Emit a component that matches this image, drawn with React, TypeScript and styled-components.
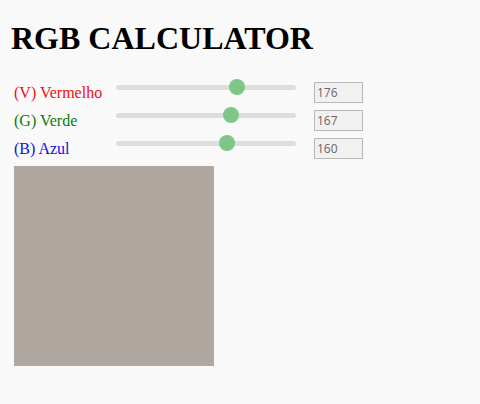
import React, { useState } from 'react'
import styled, { createGlobalStyle } from 'styled-components'

const GlobalStyle = createGlobalStyle`
  body {
    margin: 0;
    background: #f9f9f9;
    font-family: "Liberation Serif", "Times New Roman", serif;
  }
`

const Page = styled.div`
  padding: 20px 14px 0;
`

const Title = styled.h1`
  margin: 0 0 25px -3px;
  font-size: 32px;
  font-weight: bold;
  color: #000;
`

const Rows = styled.div`
  display: flex;
  flex-direction: column;
  gap: 7px;
`

const Row = styled.div`
  display: grid;
  grid-template-columns: 84px 180px 49px;
  column-gap: 18px;
  align-items: center;
  height: 21px;
`

const Label = styled.span<{ $color: string }>`
  font-size: 16px;
  color: ${({ $color }) => $color};
  white-space: nowrap;
`

const Slider = styled.input`
  -webkit-appearance: none;
  appearance: none;
  width: 180px;
  height: 5px;
  margin: 0 0 11px;
  border-radius: 3px;
  background: #dddddd;
  outline: none;

  &::-webkit-slider-thumb {
    -webkit-appearance: none;
    appearance: none;
    width: 16px;
    height: 16px;
    border-radius: 50%;
    background: #7ec787;
    border: none;
  }
`

const ValueBox = styled.input`
  box-sizing: border-box;
  width: 49px;
  height: 21px;
  padding: 0 2px;
  border: 1px solid #b8b8b8;
  background: #f1f1f1;
  color: #666666;
  font-family: "Open Sans", "DejaVu Sans", sans-serif;
  font-size: 12px;
`

const Swatch = styled.div`
  width: 200px;
  height: 200px;
  margin-top: 7px;
`

type Channel = {
  key: string
  label: string
  color: string
}

const channels: Channel[] = [
  { key: 'r', label: '(V) Vermelho', color: '#ee1111' },
  { key: 'g', label: '(G) Verde', color: '#0a7a0a' },
  { key: 'b', label: '(B) Azul', color: '#1111dd' },
]

export default function App() {
  const [values, setValues] = useState<Record<string, number>>({
    r: 176,
    g: 167,
    b: 160,
  })

  return (
    <>
      <GlobalStyle />
      <Page>
        <Title>RGB CALCULATOR</Title>
        <Rows>
          {channels.map((ch) => (
            <Row key={ch.key}>
              <Label $color={ch.color}>{ch.label}</Label>
              <Slider
                type="range"
                min={0}
                max={255}
                value={values[ch.key]}
                onChange={(e) =>
                  setValues({ ...values, [ch.key]: Number(e.target.value) })
                }
              />
              <ValueBox type="text" value={values[ch.key]} readOnly />
            </Row>
          ))}
        </Rows>
        <Swatch
          style={{
            background: `rgb(${values.r}, ${values.g}, ${values.b})`,
          }}
        />
      </Page>
    </>
  )
}
